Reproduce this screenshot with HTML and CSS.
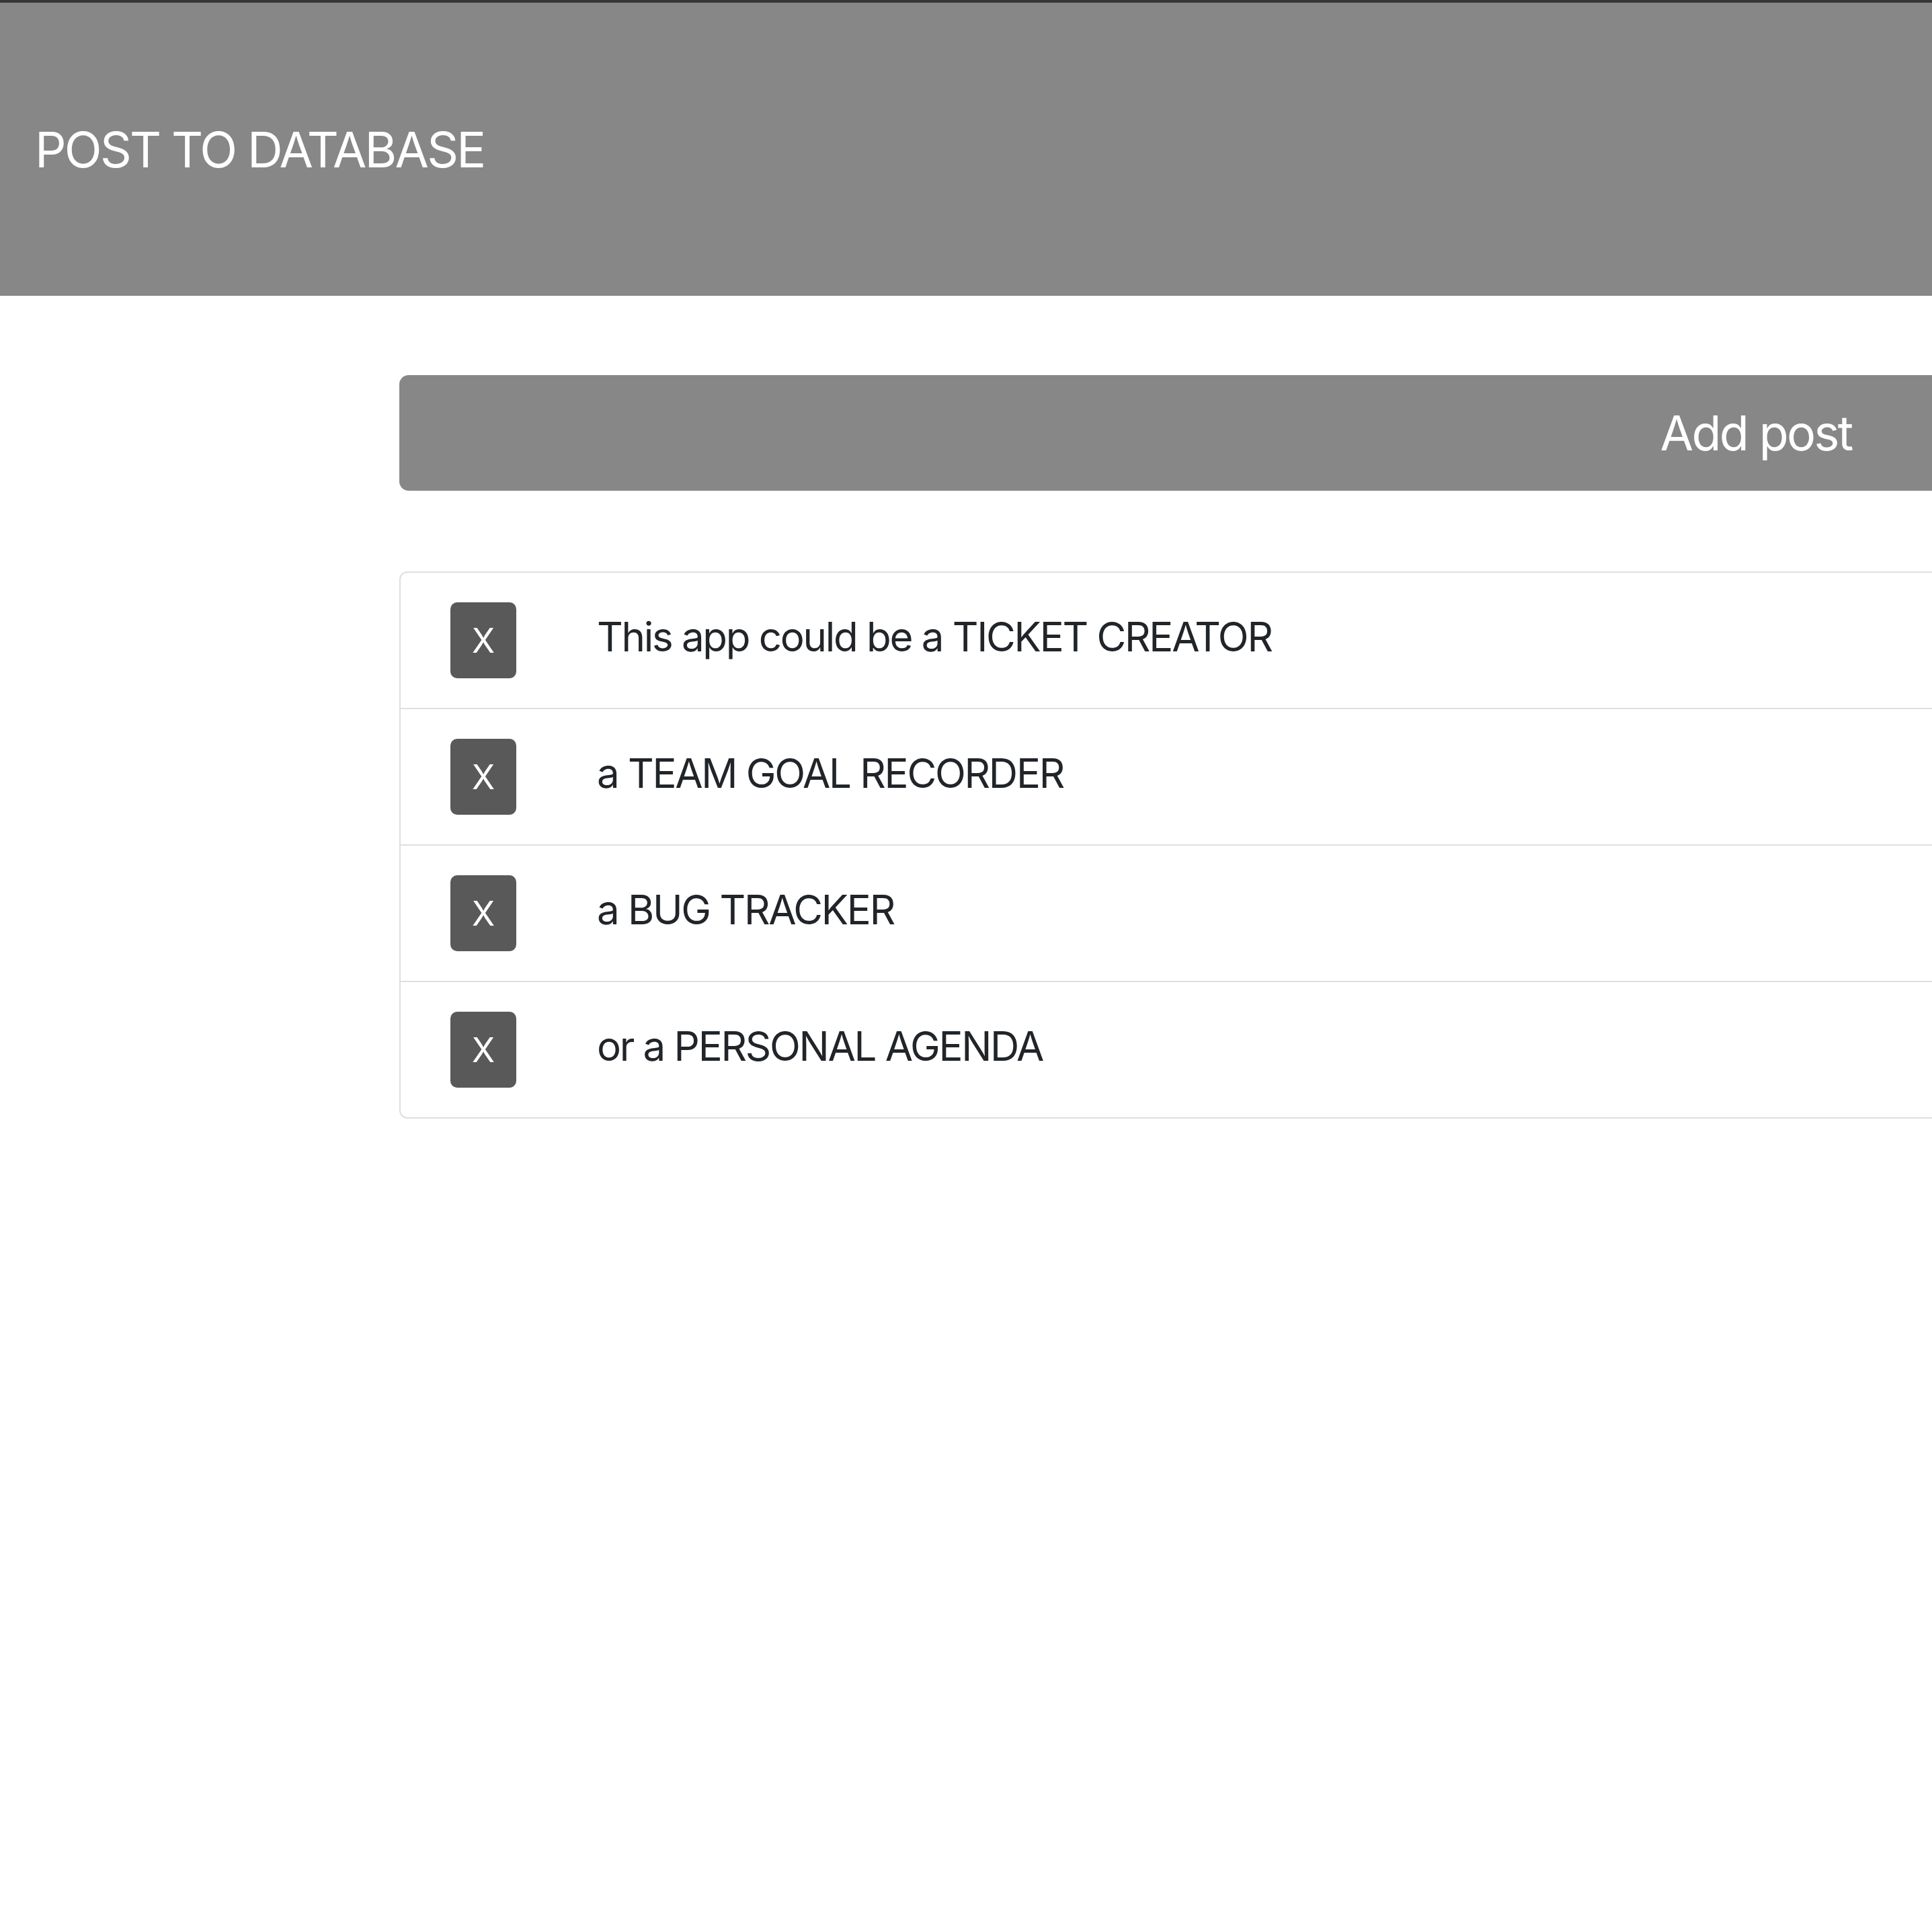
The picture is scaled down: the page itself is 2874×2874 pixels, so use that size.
FILE: index.html
```html
<!DOCTYPE html>
<html lang="en">
<head>
<meta charset="utf-8">
<title>Post to database</title>
<link rel="stylesheet" href="styles.css">
</head>
<body>
<header class="topbar">
  <div class="brand">POST TO DATABASE</div>
</header>
<main class="content">
  <button class="add-btn" type="button">Add post</button>
  <ul class="posts">
    <li class="post"><button class="del" type="button">X</button><span class="post-text">This app could be a TICKET CREATOR</span></li>
    <li class="post"><button class="del" type="button">X</button><span class="post-text">a TEAM GOAL RECORDER</span></li>
    <li class="post"><button class="del" type="button">X</button><span class="post-text">a BUG TRACKER</span></li>
    <li class="post"><button class="del" type="button">X</button><span class="post-text">or a PERSONAL AGENDA</span></li>
  </ul>
</main>
</body>
</html>
```

FILE: styles.css
```css
html, body {
  margin: 0;
  padding: 0;
  overflow: hidden;
  background: #ffffff;
}

body {
  font-family: Inter, "Liberation Sans", sans-serif;
  color: #212529;
}

.topbar {
  border-top: 4px solid #363636;
  background: #878787;
  height: 436px;
  display: flex;
  align-items: center;
  padding-left: 52px;
}

.brand {
  color: #ffffff;
  font-size: 73px;
  line-height: 1;
  letter-spacing: -0.038em;
}

.content {
  margin-left: 594px;
  width: 4036px;
  padding-top: 118px;
}

.add-btn {
  display: block;
  width: 100%;
  height: 172px;
  background: #878787;
  border: none;
  border-radius: 14px;
  color: #ffffff;
  font-family: inherit;
  font-size: 72px;
  line-height: 1;
  letter-spacing: -0.038em;
  padding: 0;
}

.posts {
  list-style: none;
  margin: 120px 0 0;
  padding: 0;
  border: 2px solid #dfdfdf;
  border-radius: 12px;
}

.post {
  display: flex;
  align-items: center;
  height: 201px;
  padding-left: 74px;
}

.post + .post {
  border-top: 2px solid #dfdfdf;
}

.del {
  width: 98px;
  height: 113px;
  background: #595959;
  border: none;
  border-radius: 10px;
  color: #ffffff;
  font-family: inherit;
  font-size: 50px;
  line-height: 1;
  padding: 0;
  flex: none;
}

.post-text {
  margin-left: 120px;
  margin-bottom: 12px;
  font-size: 60px;
  line-height: 1;
  letter-spacing: -0.038em;
}
```
